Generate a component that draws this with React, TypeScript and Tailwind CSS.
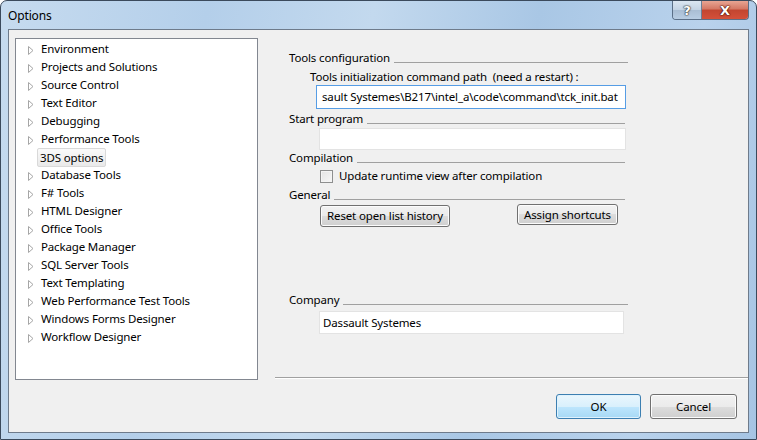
import React from "react";

const treeItems = [
  "Environment",
  "Projects and Solutions",
  "Source Control",
  "Text Editor",
  "Debugging",
  "Performance Tools",
  "3DS options",
  "Database Tools",
  "F# Tools",
  "HTML Designer",
  "Office Tools",
  "Package Manager",
  "SQL Server Tools",
  "Text Templating",
  "Web Performance Test Tools",
  "Windows Forms Designer",
  "Workflow Designer",
];

function Tri() {
  return (
    <svg width="6" height="9" viewBox="0 0 6 9" className="shrink-0">
      <path d="M0.5 0.5 L5 4.5 L0.5 8.5 Z" fill="#fff" stroke="#a6a6a6" strokeWidth="1" />
    </svg>
  );
}

function Heading({ text, lineEnd }: { text: string; lineEnd: number }) {
  return (
    <div className="flex items-end h-[16px]" style={{ width: lineEnd }}>
      <span className="leading-[16px] whitespace-nowrap">{text}</span>
      <div className="flex-1 ml-[4px] mb-[3px] border-b border-[#a0a0a0]" />
    </div>
  );
}

function Btn({ children, className = "" }: { children: React.ReactNode; className?: string }) {
  return (
    <div
      className={
        "flex items-center justify-center rounded-[3px] border border-[#707070] bg-[linear-gradient(#f2f2f2_0%,#ebebeb_50%,#dddddd_50%,#cfcfcf_100%)] shadow-[inset_0_0_0_1px_#fcfcfc] " +
        className
      }
    >
      {children}
    </div>
  );
}

export default function App() {
  return (
    <div
      className="w-[757px] h-[440px] overflow-hidden text-[11.5px] tracking-[-0.15px] text-black"
      style={{ fontFamily: '"Noto Sans", "Open Sans", sans-serif' }}
    >
      <div className="w-[757px] h-[440px] rounded-t-[7px] border border-[#3b4a5c] bg-[linear-gradient(100deg,#c6dbef_0%,#b4cfea_25%,#c3d9ee_45%,#a9c7e5_65%,#b9d2ec_85%,#a6c4e3_100%)] flex flex-col">
        {/* title bar */}
        <div className="h-[28px] flex items-start shrink-0">
          <div className="pl-[7px] pt-[7px] leading-[16px] text-[12px]">Options</div>
          <div className="flex-1" />
          <div className="flex mr-[7px] h-[19px] rounded-b-[4px] border border-t-0 border-[#5b6f87] overflow-hidden">
            <div className="w-[29px] h-full flex items-center justify-center bg-[linear-gradient(#dbe6f2_0%,#c3d3e4_50%,#a9bdd3_50%,#b8cde3_100%)] border-r border-[#6d7f95]">
              <span
                className="text-white font-bold text-[13px] leading-none"
                style={{ textShadow: "0 0 1px #333, 0 0 1px #333, 0 0 2px #333", fontFamily: '"DejaVu Sans", sans-serif' }}
              >
                ?
              </span>
            </div>
            <div className="w-[46px] h-full flex items-center justify-center bg-[linear-gradient(#e8a593_0%,#d47763_45%,#c24530_50%,#d4503a_100%)]">
              <span
                className="text-white font-bold text-[13px] leading-none"
                style={{ textShadow: "0 0 1px #4a0c00, 0 0 1px #4a0c00, 0 0 2px #4a0c00", fontFamily: '"DejaVu Sans", sans-serif' }}
              >
                X
              </span>
            </div>
          </div>
        </div>
        {/* client */}
        <div className="mx-[7px] h-[404px] border border-[#6e7b8b] bg-[#f0f0f0] flex flex-col">
          <div className="flex h-[341px] pt-[8px]">
            {/* tree */}
            <div className="ml-[6px] w-[243px] h-[342px] border border-[#828790] bg-white shrink-0 pt-[1px]">
              {treeItems.map((t, i) => {
                const sel = t === "3DS options";
                return (
                  <div key={i} className="h-[18px] flex items-center">
                    <div className="w-[25px] flex justify-end pr-[7px] pt-[2px]">{!sel && <Tri />}</div>
                    {sel ? (
                      <div className="-ml-[4px] h-[19px] mt-[1px] px-[2px] flex items-center rounded-[2px] border border-[#d9d9d9] bg-[linear-gradient(#fafafa,#e9e9e9)]">
                        <span className="leading-[16px]">{t}</span>
                      </div>
                    ) : (
                      <span className="leading-[16px] whitespace-nowrap">{t}</span>
                    )}
                  </div>
                );
              })}
            </div>
            {/* right pane */}
            <div className="flex flex-col pl-[31px] pt-[12px]">
              <Heading text="Tools configuration" lineEnd={339} />
              <div className="ml-[21px] mt-[3px] h-[16px] leading-[16px] whitespace-nowrap">
                Tools initialization command path&nbsp; (need a restart) :
              </div>
              <div className="ml-[27px] w-[310px] h-[24px] border border-[#569de5] bg-white flex items-center overflow-hidden">
                <span className="pl-[5px] whitespace-nowrap leading-[16px]">
                  sault Systemes\B217\intel_a\code\command\tck_init.bat
                </span>
              </div>
              <div className="mt-[2px]">
                <Heading text="Start program" lineEnd={336} />
              </div>
              <div className="ml-[30px] mt-[1px] w-[307px] h-[22px] border border-[#e3e3e3] bg-white" />
              <div className="mt-0">
                <Heading text="Compilation" lineEnd={336} />
              </div>
              <div className="ml-[31px] mt-[2px] h-[16px] flex items-center">
                <div className="w-[13px] h-[13px] border border-[#8e8f8f] bg-[linear-gradient(135deg,#e4e4e4,#f7f7f7)] shadow-[inset_0_0_0_1px_#f4f4f4]" />
                <span className="ml-[6px] leading-[16px]">Update runtime view after compilation</span>
              </div>
              <div className="mt-[3px]">
                <Heading text="General" lineEnd={336} />
              </div>
              <div className="flex items-start mt-[1px]">
                <Btn className="ml-[31px] mt-[1px] w-[130px] h-[22px]">
                  <span className="leading-[16px]">Reset open list history</span>
                </Btn>
                <Btn className="ml-[67px] w-[101px] h-[21px]">
                  <span className="leading-[16px]">Assign shortcuts</span>
                </Btn>
              </div>
              <div className="mt-[65px]">
                <Heading text="Company" lineEnd={339} />
              </div>
              <div className="ml-[30px] mt-[3px] w-[305px] h-[23px] border border-[#e3e3e3] bg-white flex items-center">
                <span className="pl-[3px] leading-[16px]">Dassault Systemes</span>
              </div>
            </div>
          </div>
          {/* separator */}
          <div className="ml-[266px] mt-[6px] border-t border-[#a0a0a0] border-b border-b-white" />
          <div className="flex justify-end mt-[15px] pr-[11px] gap-[9px]">
            <div className="w-[85px] h-[25px] rounded-[3px] border border-[#3c7fb1] bg-[linear-gradient(#eaf6fd_0%,#d9f0fc_50%,#bee6fd_50%,#a7d9f5_100%)] shadow-[inset_0_0_0_1px_#dff2fd] flex items-center justify-center">
              <span className="leading-[16px]">OK</span>
            </div>
            <Btn className="w-[87px] h-[25px]">
              <span className="leading-[16px]">Cancel</span>
            </Btn>
          </div>
        </div>
      </div>
    </div>
  );
}
